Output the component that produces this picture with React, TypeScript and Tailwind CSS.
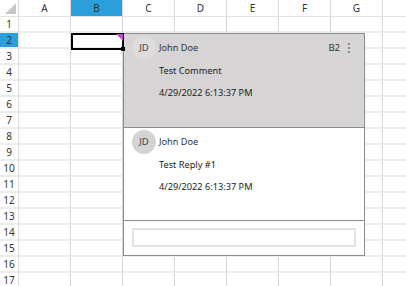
import React from "react";

const COLS = ["A", "B", "C", "D", "E", "F", "G", ""];
const ROWS = Array.from({ length: 17 }, (_, i) => i + 1);

function Avatar({ light }: { light?: boolean }) {
  return (
    <div
      className={`w-[24px] h-[24px] rounded-full flex items-center justify-center text-[9.5px] text-[#444] shrink-0 ${
        light ? "bg-[#dedcdc]" : "bg-[#d4d4d4]"
      }`}
    >
      JD
    </div>
  );
}

function Entry({ text, light }: { text: string; light?: boolean }) {
  return (
    <div className="flex gap-[3px] pl-[8px] pt-[2px]">
      <Avatar light={light} />
      <div className="flex flex-col text-[9.2px] text-[#222]">
        <div className="h-[24px] leading-[24px] text-[#333]">John Doe</div>
        <div className="h-[22px] leading-[22px]">{text}</div>
        <div className="h-[22px] leading-[22px]">4/29/2022 6:13:37 PM</div>
      </div>
    </div>
  );
}

export default function App() {
  return (
    <div
      className="relative w-[406px] h-[286px] overflow-hidden bg-white"
      style={{ fontFamily: '"Noto Sans", "Open Sans", sans-serif' }}
    >
      {/* column headers */}
      <div className="flex h-[17px] border-b border-[#e2e2e2]">
        <div className="w-[19px] shrink-0 border-r border-[#dcdcdc] flex items-end justify-end p-[2px]">
          <div className="w-[11px] h-[11px] bg-[#c8c8c8] [clip-path:polygon(100%_0,100%_100%,0_100%)]" />
        </div>
        {COLS.map((c, i) => (
          <div
            key={i}
            className={`w-[52px] shrink-0 border-r border-[#dcdcdc] flex items-center justify-center text-[10px] text-[#333] ${
              c === "B" ? "bg-[#2a9fdc]" : ""
            }`}
          >
            {c}
          </div>
        ))}
      </div>

      {/* rows */}
      {ROWS.map((r) => (
        <div key={r} className="flex h-[16px]">
          <div
            className={`w-[19px] shrink-0 border-r border-[#dcdcdc] border-b-2 border-b-[#ececec] flex items-center justify-center text-[10px] text-[#333] ${
              r === 2 ? "bg-[#2a9fdc]" : ""
            }`}
          >
            {r}
          </div>
          {COLS.map((_, i) => (
            <div key={i} className="w-[52px] shrink-0 border-r border-[#d6d6d6] border-b-2 border-b-[#ececec]" />
          ))}
        </div>
      ))}

      {/* comment popup */}
      <div className="absolute left-[123px] top-[33px] w-[242px] h-[223px] border border-[#8c8c8c] bg-white flex flex-col">
        <div className="relative h-[94px] bg-[#d6d4d4] border-b border-[#8c8c8c]">
          <Entry text="Test Comment" light />
          <div className="absolute right-[14px] top-[2px] h-[24px] flex items-center gap-[8px] text-[9.5px] text-[#333]">
            <span>B2</span>
            <span className="flex flex-col gap-[2px]">
              <span className="w-[2px] h-[2px] bg-[#888]" />
              <span className="w-[2px] h-[2px] bg-[#888]" />
              <span className="w-[2px] h-[2px] bg-[#888]" />
            </span>
          </div>
        </div>
        <div className="h-[93px] border-b border-[#8c8c8c]">
          <Entry text="Test Reply #1" />
        </div>
        <div className="flex-1 px-[8px] pt-[7px]">
          <div className="h-[19px] border-2 border-[#e2e2e2]" />
        </div>
      </div>

      {/* selection on B2 */}
      <div className="absolute left-[71px] top-[33px] w-[53px] h-[17px] border-2 border-black">
        <div className="absolute right-[-1px] top-[-1px] w-[7px] h-[7px] bg-[#c050c8] [clip-path:polygon(0_0,100%_0,100%_100%)]" />
        <div className="absolute right-[-3px] bottom-[-3px] w-[4px] h-[4px] bg-black" />
      </div>
    </div>
  );
}
